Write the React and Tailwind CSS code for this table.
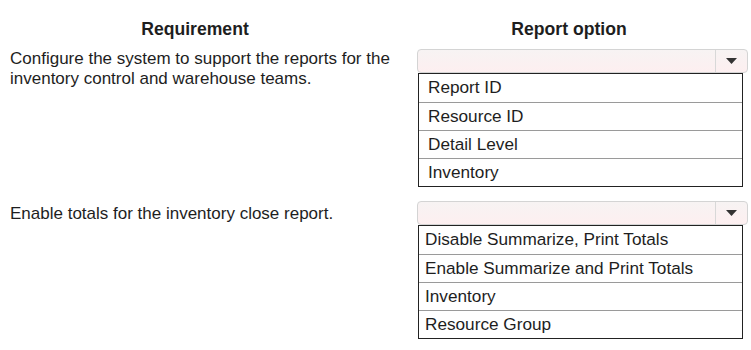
const rows = [
  {
    text: "Configure the system to support the reports for the inventory control and warehouse teams.",
    options: ["Report ID", "Resource ID", "Detail Level", "Inventory"],
    pad: "pl-[9px]",
    top: "pt-0",
  },
  {
    text: "Enable totals for the inventory close report.",
    options: [
      "Disable Summarize, Print Totals",
      "Enable Summarize and Print Totals",
      "Inventory",
      "Resource Group",
    ],
    pad: "pl-[6px]",
    top: "pt-[3px]",
  },
];

function Dropdown({ options, pad }) {
  return (
    <div className="w-[331px]">
      <div className="flex h-[24px] rounded-[4px] border border-[#d4d4d4] bg-gradient-to-b from-[#f7f3f3] to-[#fdeff0]">
        <div className="flex-1" />
        <div className="flex w-[32px] items-center justify-center border-l border-[#d8d8d8]">
          <svg width="11" height="6" viewBox="0 0 11 6">
            <path d="M0 0 H11 L5.5 6 Z" fill="#333" />
          </svg>
        </div>
      </div>
      <div className="ml-[1px] w-[325px] border border-[#222] bg-white">
        {options.map((o, i) => (
          <div
            key={o}
            className={`flex h-[28px] items-center ${pad} ${i > 0 ? "border-t border-[#9a9a9a]" : ""}`}
          >
            {o}
          </div>
        ))}
      </div>
    </div>
  );
}

export default function App() {
  return (
    <div className="h-[350px] w-[751px] bg-white pt-[18px] font-['Liberation_Sans',Arial,sans-serif] text-[#1e1e1e]">
      <div className="flex h-[22px] items-center text-[17.6px] font-bold">
        <div className="w-[390px] text-center">Requirement</div>
        <div className="w-[358px] text-center">Report option</div>
      </div>
      <div className="mt-[9px] flex flex-col gap-[14px]">
        {rows.map((r) => (
          <div key={r.text} className="flex">
            <div className={`w-[417px] pl-[10px] pr-[10px] text-[17px] leading-[20px] ${r.top}`}>
              {r.text}
            </div>
            <div className="text-[17.2px]">
              <Dropdown options={r.options} pad={r.pad} />
            </div>
          </div>
        ))}
      </div>
    </div>
  );
}
